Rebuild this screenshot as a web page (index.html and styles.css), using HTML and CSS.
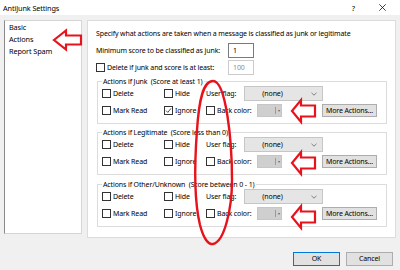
FILE: index.html
```html
<!DOCTYPE html>
<html>
<head>
<meta charset="utf-8">
<link rel="stylesheet" href="styles.css">
</head>
<body>
<div class="titlebar">
  <span class="title">AntiJunk Settings</span>
  <span class="help">?</span>
  <svg class="close" width="7" height="7" viewBox="0 0 7 7"><path d="M0.3 0.3L6.7 6.7M6.7 0.3L0.3 6.7" stroke="#111" stroke-width="0.8"/></svg>
</div>
<div class="main">
  <ul class="nav">
    <li>Basic</li>
    <li>Actions</li>
    <li>Report Spam</li>
  </ul>
  <div class="panel">
    <p class="intro">Specify what actions are taken when a message is classified as junk or legitimate</p>
    <div class="line"><span class="lab">Minimum score to be classified as junk:</span><span class="input">1</span></div>
    <div class="line"><label class="lab"><span class="cb"></span>Delete if junk and score is at least:</label><span class="input dis">100</span></div>

    <div class="group">
      <div class="legend">Actions if Junk&nbsp; (Score at least 1)</div>
      <div class="row">
        <label class="c1"><span class="cb"></span>Delete</label>
        <label class="c2"><span class="cb"></span>Hide</label>
        <span class="c3">User flag:</span>
        <span class="combo">(none)<svg class="chev" width="6" height="4" viewBox="0 0 6 4"><path d="M0.5 0.8L3 3.2L5.5 0.8" fill="none" stroke="#555" stroke-width="0.7"/></svg></span>
      </div>
      <div class="row">
        <label class="c1"><span class="cb"></span>Mark Read</label>
        <label class="c2"><span class="cb on"><svg width="7" height="7" viewBox="0 0 7 7"><path d="M1 3.6L2.8 5.4L6 1.4" fill="none" stroke="#222" stroke-width="0.8"/></svg></span>Ignore</label>
        <label class="c3b"><span class="cb"></span>Back color:</label>
        <span class="color"><span class="sw"></span><span class="dd">&#9662;</span></span>
        <span class="more">More Actions...</span>
      </div>
    </div>

    <div class="group">
      <div class="legend">Actions if Legitimate&nbsp; (Score less than 0)</div>
      <div class="row">
        <label class="c1"><span class="cb"></span>Delete</label>
        <label class="c2"><span class="cb"></span>Hide</label>
        <span class="c3">User flag:</span>
        <span class="combo">(none)<svg class="chev" width="6" height="4" viewBox="0 0 6 4"><path d="M0.5 0.8L3 3.2L5.5 0.8" fill="none" stroke="#555" stroke-width="0.7"/></svg></span>
      </div>
      <div class="row">
        <label class="c1"><span class="cb"></span>Mark Read</label>
        <label class="c2"><span class="cb"></span>Ignore</label>
        <label class="c3b"><span class="cb"></span>Back color:</label>
        <span class="color"><span class="sw"></span><span class="dd">&#9662;</span></span>
        <span class="more">More Actions...</span>
      </div>
    </div>

    <div class="group g3">
      <div class="legend">Actions if Other/Unknown&nbsp; (Score between 0 - 1)</div>
      <div class="row">
        <label class="c1"><span class="cb"></span>Delete</label>
        <label class="c2"><span class="cb"></span>Hide</label>
        <span class="c3">User flag:</span>
        <span class="combo">(none)<svg class="chev" width="6" height="4" viewBox="0 0 6 4"><path d="M0.5 0.8L3 3.2L5.5 0.8" fill="none" stroke="#555" stroke-width="0.7"/></svg></span>
      </div>
      <div class="row">
        <label class="c1"><span class="cb"></span>Mark Read</label>
        <label class="c2"><span class="cb"></span>Ignore</label>
        <label class="c3b"><span class="cb"></span>Back color:</label>
        <span class="color"><span class="sw"></span><span class="dd">&#9662;</span></span>
        <span class="more">More Actions...</span>
      </div>
    </div>
  </div>
</div>
<div class="footer">
  <span class="btn ok">OK</span>
  <span class="btn">Cancel</span>
</div>

<svg class="annot" width="400" height="270" viewBox="0 0 400 270">
  <g fill="none" stroke="#e8121c" stroke-width="2.2" stroke-linejoin="miter">
    <path d="M54 40 L66 30.5 L66 35.5 L81 35.5 L81 44.5 L66 44.5 L66 49.5 Z"/>
    <path d="M292 111 L301 100 L301 105.5 L315 105.5 L315 116.5 L301 116.5 L301 122 Z"/>
    <path d="M292 163 L301 152 L301 157.5 L315 157.5 L315 168.5 L301 168.5 L301 174 Z"/>
    <path d="M292 217 L301 206 L301 211.5 L315 211.5 L315 222.5 L301 222.5 L301 228 Z"/>
    <path d="M213 81 C203 81 199 100 197 130 C194 170 194 200 200 225 C204 240 209 245 213 244 C224 242 232 210 232 180 C232 140 226 81 213 81 Z" stroke-width="2.4"/>
  </g>
</svg>
</body>
</html>
```
FILE: styles.css
```css
* { box-sizing: border-box; }
body {
  margin: 0;
  width: 400px;
  height: 270px;
  background: #f0f0f0;
  font-family: "Noto Sans", "Open Sans", sans-serif;
  font-size: 7px;
  letter-spacing: -0.12px;
  color: #000;
  position: relative;
  overflow: hidden;
}
.titlebar {
  height: 15px;
  background: #fff;
  display: flex;
  align-items: center;
  padding: 0 14px 0 3px;
}
.title { flex: 1; font-size: 7.3px; }
.help { margin-right: 24px; font-size: 7.5px; }
.close { display: block; }

.main {
  display: flex;
  padding: 5px 4px 0 4px;
}
.nav {
  list-style: none;
  margin: 0;
  padding: 0 0 0 4px;
  width: 78px;
  height: 214px;
  background: #fff;
  border: 1px solid #d5d5d5;
  border-left-color: #8a8a8a;
}
.nav li { height: 12px; line-height: 12px; font-size: 7.3px; }
.panel {
  margin-left: 5px;
  width: 309px;
  height: 218px;
  background: #fff;
  border: 1px solid #dcdcdc;
  padding: 8px 0 0 8px;
}
.intro { margin: 0; height: 10px; line-height: 10px; }
.line {
  display: flex;
  align-items: center;
  height: 15px;
  margin-top: 4px;
}
.line + .line { margin-top: 2px; }
.lab { width: 132px; display: flex; align-items: center; }
.input {
  width: 26px;
  height: 15px;
  border: 1px solid #7a7a7a;
  background: #fff;
  padding-left: 4px;
  line-height: 13px;
}
.input.dis { border-color: #cccccc; color: #8d8d8d; }
.cb {
  display: inline-flex;
  align-items: center;
  justify-content: center;
  width: 9px;
  height: 9px;
  border: 1px solid #333;
  background: #fff;
  margin-right: 2px;
  flex: none;
}
.cb svg { display: block; }
.group {
  margin: 6px 0 0 1px;
  width: 290px;
  height: 43px;
  border: 1px solid #dcdcdc;
  padding: 0 0 0 4px;
}
.group + .group { margin-top: 8px; }
.group.g3 { margin-top: 9px; }
.legend {
  margin-top: -5px;
  width: fit-content;
  height: 9px;
  line-height: 9px;
  background: #fff;
  padding: 0 1px 0 1px;
}
.row {
  display: flex;
  align-items: center;
  height: 15px;
}
.row + .row { margin-top: 2px; }
.c1 { width: 62px; display: flex; align-items: center; }
.c2 { width: 42px; display: flex; align-items: center; }
.c3 { width: 38px; }
.c3b { width: 51px; display: flex; align-items: center; }
.combo {
  width: 79px;
  height: 15px;
  background: #e5e5e5;
  border: 1px solid #c6c6c6;
  display: flex;
  align-items: center;
  justify-content: center;
  position: relative;
  padding-right: 22px;
}
.chev { position: absolute; right: 5px; top: 5px; }
.color {
  width: 25px;
  height: 13px;
  background: #cfcfcf;
  border: 1px solid #c6c6c6;
  display: flex;
}
.sw { flex: 1; border-right: 1px solid #9a9a9a; margin: 2px 0; }
.dd { width: 5px; font-size: 4px; line-height: 11px; text-align: center; color: #666; }
.more {
  margin-left: 40px;
  width: 55px;
  height: 13px;
  background: #e1e1e1;
  border: 1px solid #adadad;
  line-height: 11px;
  text-align: center;
}
.footer {
  display: flex;
  justify-content: flex-end;
  gap: 6px;
  padding-right: 7px;
  margin-top: 14px;
}
.btn {
  width: 47px;
  height: 14px;
  background: #e1e1e1;
  border: 1px solid #adadad;
  text-align: center;
  line-height: 12px;
}
.btn.ok { border-color: #0078d7; }
.annot { position: absolute; left: 0; top: 0; pointer-events: none; }
```
